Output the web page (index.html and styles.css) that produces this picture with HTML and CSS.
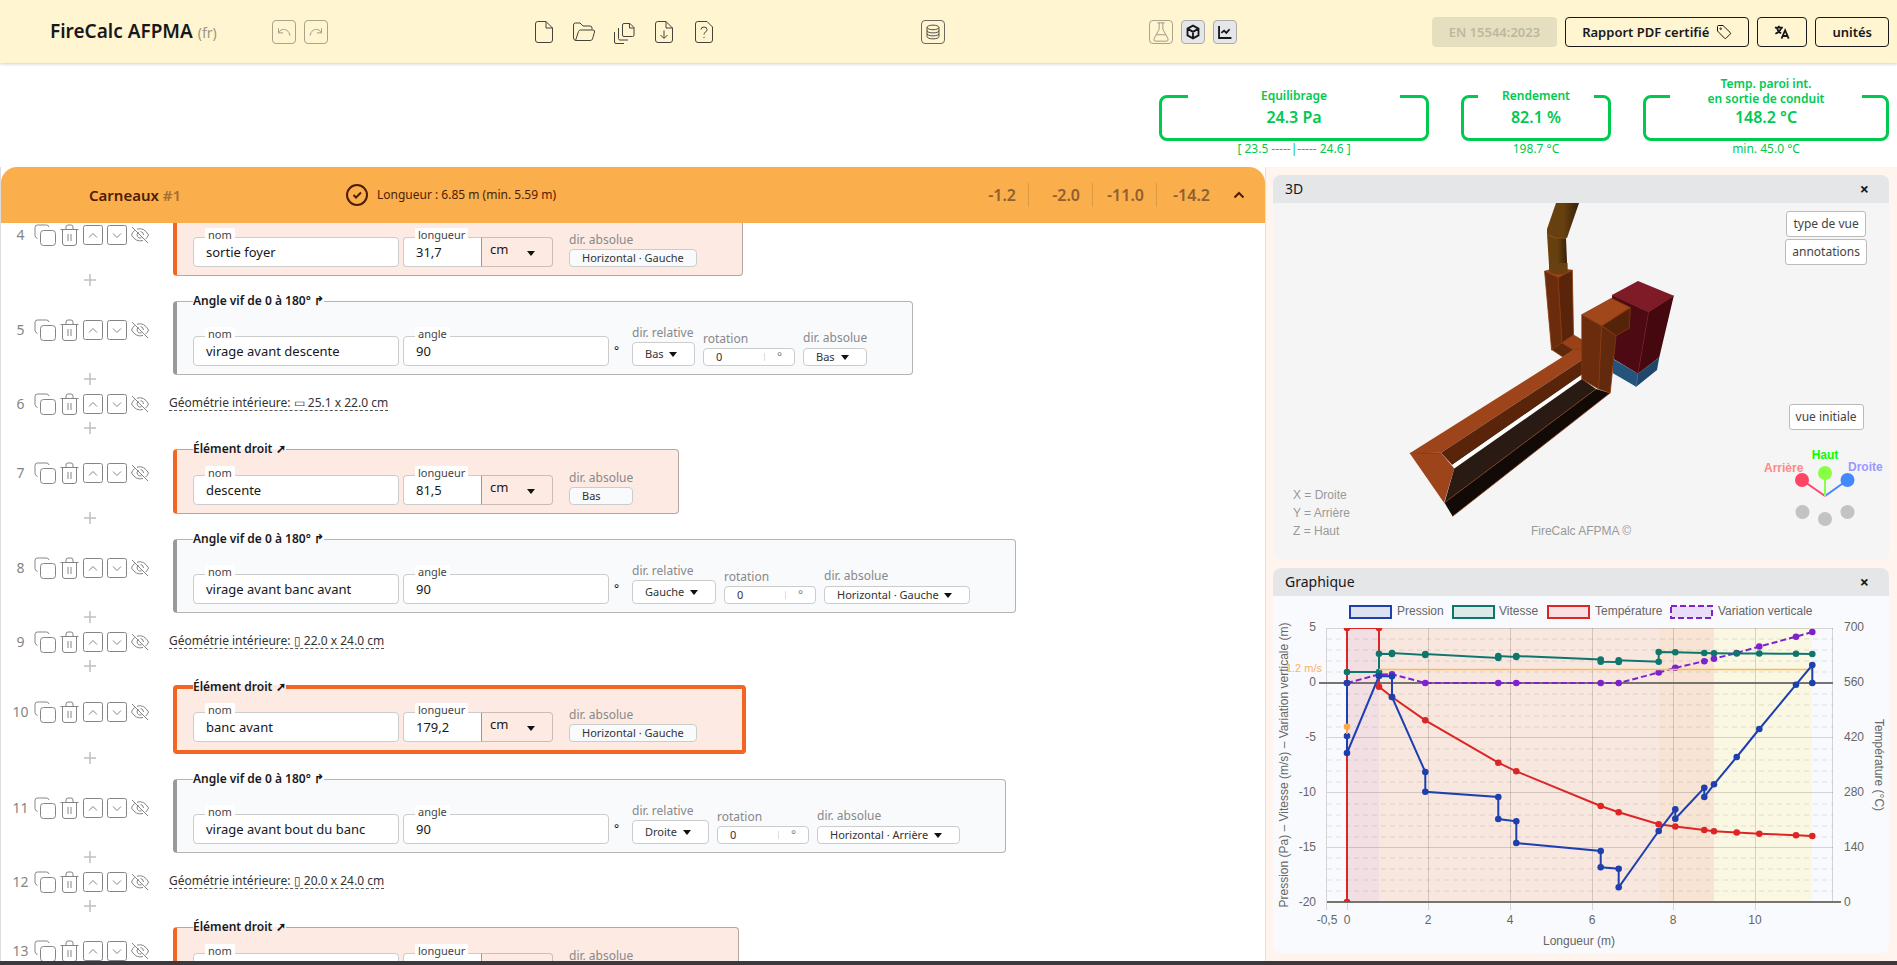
FILE: index.html
```html
<!DOCTYPE html>
<html lang="fr">
<head>
<meta charset="utf-8">
<meta name="viewport" content="width=device-width, initial-scale=1">
<title>FireCalc AFPMA</title>
<link rel="stylesheet" href="styles.css">
</head>
<body>
<svg class="sprite" aria-hidden="true">
  <symbol id="i-copy" viewBox="0 0 22 22"><path d="M3.500 14.500Q1 13.500 1 11.500V3.500Q1 1 3.500 1H12.500Q14.500 1 15 3"/><rect x="6.500" y="6.500" width="15" height="15" rx="3"/></symbol>
  <symbol id="i-trash" viewBox="0 0 18 22"><path d="M0 5.500H18M2 5.500V19Q2 21.500 4.500 21.500H13.500Q16 21.500 16 19V5.500M5.500 5V3Q5.500 1 7.500 1H10.500Q12.500 1 12.500 3V5M7.500 10V17M10.500 10V17"/></symbol>
  <symbol id="i-up" viewBox="0 0 20 20"><rect x=".5" y=".5" width="19" height="19" rx="2"/><path d="M6 12.500 10 8.500 14 12.500"/></symbol>
  <symbol id="i-down" viewBox="0 0 20 20"><rect x=".5" y=".5" width="19" height="19" rx="2"/><path d="M6 8.500 10 12.500 14 8.500"/></symbol>
  <symbol id="i-eye" viewBox="0 0 18 18"><path d="M1 1 17 17M6 3.200Q13 1 17.500 9 16.500 11.500 14.500 13.200M3.500 4.500Q1.500 6.500.500 9 5 16.500 12 14.500M7.500 6.200Q5 8 6.500 10.500 8 12.800 10.500 11.800M9.500 5.500Q12.500 6 12.500 9"/></symbol>
  <symbol id="i-plus" viewBox="0 0 12 12"><path d="M6 0V12M0 6H12" stroke-width="1.500"/></symbol>
  <symbol id="i-caret" viewBox="0 0 8 5"><path d="M0 0H8L4 5Z" fill="#111" stroke="none"/></symbol>
</svg>

<header class="topbar">
  <h1 class="brand">FireCalc AFPMA <small>(fr)</small></h1>
  <div class="group tight">
    <button class="tool faded" aria-label="Annuler"><svg viewBox="0 0 24 24"><path d="M6 8V13H11M6 13C8 9 12 8.500 15 10Q18 12 18.500 16"/></svg></button>
    <button class="tool faded" aria-label="Rétablir"><svg viewBox="0 0 24 24"><path d="M18 8V13H13M18 13C16 9 12 8.500 9 10Q6 12 5.500 16"/></svg></button>
  </div>
  <div class="group files">
    <button class="plain" aria-label="Nouveau"><svg viewBox="0 0 24 24"><path d="M5.500 1.500H14L20.500 8V20Q20.500 22.500 18 22.500H6Q3.500 22.500 3.500 20V4Q3.500 1.500 5.500 1.500ZM14 1.500V8H20.500"/></svg></button>
    <button class="plain" aria-label="Ouvrir"><svg viewBox="0 0 24 24"><path d="M3.500 20.500Q1.500 20 1.500 18V5Q1.500 3 3.500 3H8L11 6H18Q20 6 20 8V9.500M3.500 20.500 6.500 11.500Q7 10 8.500 10H21Q23 10 22.500 12L20.500 19Q20 20.500 18 20.500Z"/></svg></button>
    <button class="plain" aria-label="Dupliquer"><svg viewBox="0 0 24 24"><path d="M12 3.500H18L22 7.500V15Q22 16.500 20.500 16.500H12Q10.500 16.500 10.500 15V5Q10.500 3.500 12 3.500ZM17.500 3.500V8H22M6.500 8V18.500Q6.500 20 8 20H16M2.500 12V22Q2.500 23.500 4 23.500H12"/></svg></button>
    <button class="plain" aria-label="Enregistrer"><svg viewBox="0 0 24 24"><path d="M5.500 1.500H14L20.500 8V20Q20.500 22.500 18 22.500H6Q3.500 22.500 3.500 20V4Q3.500 1.500 5.500 1.500ZM14 1.500V8H20.500M12 10.500V18M8.500 15 12 18.500 15.500 15"/></svg></button>
    <button class="plain" aria-label="Aide"><svg viewBox="0 0 24 24"><path d="M5.500 1.500H15L20.500 7V20Q20.500 22.500 18 22.500H6Q3.500 22.500 3.500 20V4Q3.500 1.500 5.500 1.500ZM9 9.500Q9 7 12 7T15 9.500Q15 11 13.500 12 12 13 12 14.500M12 17V18"/></svg></button>
  </div>
  <div class="group center">
    <button class="tool" aria-label="Base de données"><svg viewBox="0 0 24 24"><ellipse cx="12" cy="7" rx="6.500" ry="2.500"/><path d="M5.500 7V17C5.500 20.300 18.500 20.300 18.500 17V7M5.500 10.500C5.500 13.800 18.500 13.800 18.500 10.500M5.500 13.800C5.500 17 18.500 17 18.500 13.800"/></svg></button>
  </div>
  <div class="group center tight">
    <button class="tool faded" aria-label="Laboratoire"><svg viewBox="0 0 24 24"><path d="M8 2H16M10 2V9L4.500 19Q3.500 22 6 22H18Q20.500 22 19.500 19L14 9V2M7 15H17"/></svg></button>
    <button class="tool on" aria-label="3D"><svg viewBox="0 0 24 24"><path d="M12 5 18 8.300V15.700L12 19 6 15.700V8.300ZM6 8.300 12 11.800 18 8.300M12 11.800V19"/></svg></button>
    <button class="tool on" aria-label="Graphique"><svg viewBox="0 0 24 24"><path d="M5.500 5.500V18.500H19M8 13 11 10.500 13.500 13 17 9"/></svg></button>
  </div>
  <div class="group actions">
    <button class="btn" disabled>EN 15544:2023</button>
    <button class="btn">Rapport PDF certifié <svg viewBox="0 0 16 16"><path d="M1.500 2.500V7L8.500 14.200Q9.300 15 10.100 14.200L14.200 10.100Q15 9.300 14.200 8.500L7 1.500H2.500Q1.500 1.500 1.500 2.500Z"/><circle cx="4.700" cy="4.700" r=".8"/></svg></button>
    <button class="btn lang" aria-label="Langue"><svg viewBox="0 0 18 18"><path d="M1 4H10M5.500 2V4M8.500 4Q7 9 1.500 11M3 4Q4 8 8 10.500M8.500 16.500 12.500 7 16.500 16.500M9.800 13.500H15.200"/></svg></button>
    <button class="btn">unités</button>
  </div>
</header>

<section class="status">
  <div class="gauge wide">
    <div class="gauge-box"><span class="gauge-label">Equilibrage</span><strong>24.3 Pa</strong></div>
    <p>[ 23.5 -----|----- 24.6 ]</p>
  </div>
  <div class="gauge narrow">
    <div class="gauge-box"><span class="gauge-label">Rendement</span><strong>82.1 %</strong></div>
    <p>198.7 °C</p>
  </div>
  <div class="gauge medium">
    <div class="gauge-box"><span class="gauge-label double">Temp. paroi int.<br>en sortie de conduit</span><strong>148.2 °C</strong></div>
    <p>min. 45.0 °C</p>
  </div>
</section>

<main class="work">
  <section class="editor">
    <div class="banner">
      <h2>Carneaux <span>#1</span></h2>
      <div class="check"><svg viewBox="0 0 22 22"><circle cx="11" cy="11" r="10"/><path d="M7.500 11 10 13.500 15 8.500"/></svg>Longueur : 6.85 m (min. 5.59 m)</div>
      <div class="totals"><span>-1.2</span><span>-2.0</span><span>-11.0</span><span>-14.2</span></div>
      <button class="fold" aria-label="Replier"><svg viewBox="0 0 12 8"><path d="M1.500 6.500 6 2 10.500 6.500"/></svg></button>
    </div>
    <div class="scroller">
    <ol class="rows">
      <li class="row">
        <div class="ctl"><span>4</span><button aria-label="Copier"><svg class="copy"><use href="#i-copy"/></svg></button><button aria-label="Supprimer"><svg class="trash"><use href="#i-trash"/></svg></button><button aria-label="Monter"><svg class="move"><use href="#i-up"/></svg></button><button aria-label="Descendre"><svg class="move"><use href="#i-down"/></svg></button><button aria-label="Masquer"><svg class="eye"><use href="#i-eye"/></svg></button><button class="add" aria-label="Ajouter"><svg><use href="#i-plus"/></svg></button></div>
        <fieldset class="card straight"><legend>Élément droit ➚</legend><div class="fields">
          <label class="field"><span>nom</span><input value="sortie foyer"></label>
          <label class="field num"><span>longueur</span><input value="31,7"></label>
          <span class="unit"><select aria-label="unité"><option>cm</option></select><svg><use href="#i-caret"/></svg></span>
          <div class="dir"><span>dir. absolue</span><output>Horizontal · Gauche</output></div>
        </div></fieldset>
      </li>
      <li class="row">
        <div class="ctl"><span>5</span><button aria-label="Copier"><svg class="copy"><use href="#i-copy"/></svg></button><button aria-label="Supprimer"><svg class="trash"><use href="#i-trash"/></svg></button><button aria-label="Monter"><svg class="move"><use href="#i-up"/></svg></button><button aria-label="Descendre"><svg class="move"><use href="#i-down"/></svg></button><button aria-label="Masquer"><svg class="eye"><use href="#i-eye"/></svg></button><button class="add" aria-label="Ajouter"><svg><use href="#i-plus"/></svg></button></div>
        <fieldset class="card angle"><legend>Angle vif de 0 à 180° ↱</legend><div class="fields">
          <label class="field"><span>nom</span><input value="virage avant descente"></label>
          <label class="field"><span>angle</span><input value="90"></label><span class="deg">°</span>
          <label class="pick tall"><span>dir. relative</span><span class="sel"><select><option>Bas</option></select><svg><use href="#i-caret"/></svg></span></label>
          <label class="pick"><span>rotation</span><span class="rot"><input value="0"><i>°</i></span></label>
          <label class="pick"><span class="up">dir. absolue</span><span class="sel"><select><option>Bas</option></select><svg><use href="#i-caret"/></svg></span></label>
        </div></fieldset>
      </li>
      <li class="row">
        <div class="ctl"><span>6</span><button aria-label="Copier"><svg class="copy"><use href="#i-copy"/></svg></button><button aria-label="Supprimer"><svg class="trash"><use href="#i-trash"/></svg></button><button aria-label="Monter"><svg class="move"><use href="#i-up"/></svg></button><button aria-label="Descendre"><svg class="move"><use href="#i-down"/></svg></button><button aria-label="Masquer"><svg class="eye"><use href="#i-eye"/></svg></button><button class="add" aria-label="Ajouter"><svg><use href="#i-plus"/></svg></button></div>
        <a class="geo" href="#geo6">Géométrie intérieure: ▭ 25.1 x 22.0 cm</a>
      </li>
      <li class="row">
        <div class="ctl"><span>7</span><button aria-label="Copier"><svg class="copy"><use href="#i-copy"/></svg></button><button aria-label="Supprimer"><svg class="trash"><use href="#i-trash"/></svg></button><button aria-label="Monter"><svg class="move"><use href="#i-up"/></svg></button><button aria-label="Descendre"><svg class="move"><use href="#i-down"/></svg></button><button aria-label="Masquer"><svg class="eye"><use href="#i-eye"/></svg></button><button class="add" aria-label="Ajouter"><svg><use href="#i-plus"/></svg></button></div>
        <fieldset class="card straight"><legend>Élément droit ➚</legend><div class="fields">
          <label class="field"><span>nom</span><input value="descente"></label>
          <label class="field num"><span>longueur</span><input value="81,5"></label>
          <span class="unit"><select aria-label="unité"><option>cm</option></select><svg><use href="#i-caret"/></svg></span>
          <div class="dir"><span>dir. absolue</span><output>Bas</output></div>
        </div></fieldset>
      </li>
      <li class="row">
        <div class="ctl"><span>8</span><button aria-label="Copier"><svg class="copy"><use href="#i-copy"/></svg></button><button aria-label="Supprimer"><svg class="trash"><use href="#i-trash"/></svg></button><button aria-label="Monter"><svg class="move"><use href="#i-up"/></svg></button><button aria-label="Descendre"><svg class="move"><use href="#i-down"/></svg></button><button aria-label="Masquer"><svg class="eye"><use href="#i-eye"/></svg></button><button class="add" aria-label="Ajouter"><svg><use href="#i-plus"/></svg></button></div>
        <fieldset class="card angle"><legend>Angle vif de 0 à 180° ↱</legend><div class="fields">
          <label class="field"><span>nom</span><input value="virage avant banc avant"></label>
          <label class="field"><span>angle</span><input value="90"></label><span class="deg">°</span>
          <label class="pick tall"><span>dir. relative</span><span class="sel"><select><option>Gauche</option></select><svg><use href="#i-caret"/></svg></span></label>
          <label class="pick"><span>rotation</span><span class="rot"><input value="0"><i>°</i></span></label>
          <label class="pick"><span class="up">dir. absolue</span><span class="sel"><select><option>Horizontal · Gauche</option></select><svg><use href="#i-caret"/></svg></span></label>
        </div></fieldset>
      </li>
      <li class="row">
        <div class="ctl"><span>9</span><button aria-label="Copier"><svg class="copy"><use href="#i-copy"/></svg></button><button aria-label="Supprimer"><svg class="trash"><use href="#i-trash"/></svg></button><button aria-label="Monter"><svg class="move"><use href="#i-up"/></svg></button><button aria-label="Descendre"><svg class="move"><use href="#i-down"/></svg></button><button aria-label="Masquer"><svg class="eye"><use href="#i-eye"/></svg></button><button class="add" aria-label="Ajouter"><svg><use href="#i-plus"/></svg></button></div>
        <a class="geo" href="#geo9">Géométrie intérieure: ▯ 22.0 x 24.0 cm</a>
      </li>
      <li class="row">
        <div class="ctl"><span>10</span><button aria-label="Copier"><svg class="copy"><use href="#i-copy"/></svg></button><button aria-label="Supprimer"><svg class="trash"><use href="#i-trash"/></svg></button><button aria-label="Monter"><svg class="move"><use href="#i-up"/></svg></button><button aria-label="Descendre"><svg class="move"><use href="#i-down"/></svg></button><button aria-label="Masquer"><svg class="eye"><use href="#i-eye"/></svg></button><button class="add" aria-label="Ajouter"><svg><use href="#i-plus"/></svg></button></div>
        <fieldset class="card straight selected"><legend>Élément droit ➚</legend><div class="fields">
          <label class="field"><span>nom</span><input value="banc avant"></label>
          <label class="field num"><span>longueur</span><input value="179,2"></label>
          <span class="unit"><select aria-label="unité"><option>cm</option></select><svg><use href="#i-caret"/></svg></span>
          <div class="dir"><span>dir. absolue</span><output>Horizontal · Gauche</output></div>
        </div></fieldset>
      </li>
      <li class="row">
        <div class="ctl"><span>11</span><button aria-label="Copier"><svg class="copy"><use href="#i-copy"/></svg></button><button aria-label="Supprimer"><svg class="trash"><use href="#i-trash"/></svg></button><button aria-label="Monter"><svg class="move"><use href="#i-up"/></svg></button><button aria-label="Descendre"><svg class="move"><use href="#i-down"/></svg></button><button aria-label="Masquer"><svg class="eye"><use href="#i-eye"/></svg></button><button class="add" aria-label="Ajouter"><svg><use href="#i-plus"/></svg></button></div>
        <fieldset class="card angle"><legend>Angle vif de 0 à 180° ↱</legend><div class="fields">
          <label class="field"><span>nom</span><input value="virage avant bout du banc"></label>
          <label class="field"><span>angle</span><input value="90"></label><span class="deg">°</span>
          <label class="pick tall"><span>dir. relative</span><span class="sel"><select><option>Droite</option></select><svg><use href="#i-caret"/></svg></span></label>
          <label class="pick"><span>rotation</span><span class="rot"><input value="0"><i>°</i></span></label>
          <label class="pick"><span class="up">dir. absolue</span><span class="sel"><select><option>Horizontal · Arrière</option></select><svg><use href="#i-caret"/></svg></span></label>
        </div></fieldset>
      </li>
      <li class="row">
        <div class="ctl"><span>12</span><button aria-label="Copier"><svg class="copy"><use href="#i-copy"/></svg></button><button aria-label="Supprimer"><svg class="trash"><use href="#i-trash"/></svg></button><button aria-label="Monter"><svg class="move"><use href="#i-up"/></svg></button><button aria-label="Descendre"><svg class="move"><use href="#i-down"/></svg></button><button aria-label="Masquer"><svg class="eye"><use href="#i-eye"/></svg></button><button class="add" aria-label="Ajouter"><svg><use href="#i-plus"/></svg></button></div>
        <a class="geo" href="#geo12">Géométrie intérieure: ▯ 20.0 x 24.0 cm</a>
      </li>
      <li class="row">
        <div class="ctl"><span>13</span><button aria-label="Copier"><svg class="copy"><use href="#i-copy"/></svg></button><button aria-label="Supprimer"><svg class="trash"><use href="#i-trash"/></svg></button><button aria-label="Monter"><svg class="move"><use href="#i-up"/></svg></button><button aria-label="Descendre"><svg class="move"><use href="#i-down"/></svg></button><button aria-label="Masquer"><svg class="eye"><use href="#i-eye"/></svg></button></div>
        <fieldset class="card straight"><legend>Élément droit ➚</legend><div class="fields">
          <label class="field"><span>nom</span><input></label>
          <label class="field num"><span>longueur</span><input></label>
          <span class="unit"><select aria-label="unité"><option>cm</option></select><svg><use href="#i-caret"/></svg></span>
          <div class="dir"><span>dir. absolue</span><output>Horizontal · Arrière</output></div>
        </div></fieldset>
      </li>
    </ol>
    </div>
  </section>

  <aside class="side">
    <section class="panel view">
      <header><h3>3D</h3><button aria-label="Fermer">×</button></header>
      <div class="stage">
        <svg viewBox="0 0 616 357" role="img" aria-label="Vue 3D du poêle">
          <defs>
            <linearGradient id="pipe"><stop offset="0" stop-color="#69400f"/><stop offset=".5" stop-color="#66400f"/><stop offset="1" stop-color="#38200a"/></linearGradient>
          </defs>
          <g stroke="none" stroke-width="1" stroke-linejoin="round">
            <g fill="url(#pipe)"><path d="M283 0H306L294 35H282L274 31V26Z"/><path d="M274 31 282 35H293L294.500 70Q286 74 276.500 70Z"/></g>
            <path d="M274 31 282 35H293" fill="none" stroke="#8a4a12"/>
            <g stroke="#84390f" stroke-width=".8">
              <path fill="#9e441a" d="M271.600 68.300 283 65 299.300 67.300 285.200 74.700Z"/>
              <path fill="#6b2c0d" d="M271.600 68.300 285.200 74.700 289 140 278.600 147Z"/>
              <path fill="#5a240a" d="M285.200 74.700 299.300 67.300 300.500 132 289 140Z"/>
              <path fill="#5f280c" d="M278.600 146.500 289 139.700 300.500 147 289.800 154Z"/>
              <path fill="#9a4118" d="M289 139.700 300.500 132 309 137V147H300.500Z"/>
              <path fill="#9e441a" stroke="none" d="M300.500 147H309V157L168 249.700 136.700 250.300Z"/>
              <path fill="#5a240a" stroke="none" d="M309 157V172L179.200 262 168 249.700Z"/>
            </g>
            <path fill="#69400f" d="M276.500 69Q286 74 294.500 69V60H276Z"/>
            <path fill="#fff" d="M309 171.500V176L181.300 265.500 179.200 262Z"/>
            <path fill="#9e441a" d="M136.700 250.300 168 249.700 181.300 265.500 171 299.700Z"/>
            <path fill="none" stroke="#84390f" stroke-width=".8" d="M136.700 250.300H168"/>
            <path fill="#291b14" d="M181.300 265.500 309 176 323 186 171.500 299.700Z"/>
            <path fill="#120a06" d="M171.500 299.700 323 186 337 190 179.600 313.300Z"/>
            <path fill="none" stroke="#84390f" stroke-width=".8" d="M171.500 299.700 323 186M337 190 179.600 313.300"/>
            <path fill="#24547c" d="M340 156 365 170.700 363.200 183.700 340 170.300Z"/>
            <path fill="#1f476b" d="M365 170.700 386.300 154.300 384 167 363.200 183.700Z"/>
            <path fill="none" stroke="#2f6b9b" stroke-width=".8" d="M365 170.700 363.200 183.700"/>
            <path fill="#4e0a13" d="M339 92 375.600 109 365 170.700 341 156.300Z"/>
            <path fill="#45080f" d="M375.600 109 400.800 92.700 386.300 154.300 365 170.700Z"/>
            <path fill="#7e1b26" d="M339 92 365 78 400.800 92.700 375.600 109Z"/>
            <path fill="none" stroke="#701019" stroke-width=".8" d="M339 92 375.600 109 400.800 92.700M375.600 109 365 170.700"/>
            <g stroke="#84390f" stroke-width=".8">
              <path fill="#6b2c0d" d="M308.800 111.700 328.600 122.700 325.700 186 308.800 176Z"/>
              <path fill="#62290c" d="M328.600 122.700 343 132.700 337.200 190 325.700 186Z"/>
              <path fill="#55230a" d="M328.600 122.700 357.400 105 356.200 125.300 343 132.700Z"/>
              <path fill="#a2471b" d="M308.800 111.700 338.500 95.300 357.400 104.500 328.600 122.700Z"/>
            </g>
          </g>
          <g stroke-width="2"><path stroke="#ff4466" d="M552 293 529 277"/><path stroke="#4488ff" d="M552 293 574.500 277"/><path stroke="#88ff44" d="M552 293V271"/></g>
          <g stroke="none"><circle cx="529" cy="277" r="7" fill="#ff4466"/><circle cx="552" cy="270" r="7" fill="#88ff44"/><circle cx="574.500" cy="277" r="7" fill="#4488ff"/></g>
          <g fill="#c3c3c3" stroke="none"><circle cx="529.500" cy="309" r="7"/><circle cx="552" cy="316" r="7"/><circle cx="574.500" cy="309" r="7"/></g>
          <g class="strong"><text x="552" y="256" text-anchor="middle" fill="#0f0">Haut</text><text x="491" y="269" fill="#f88">Arrière</text><text x="575" y="268" fill="#99f">Droite</text></g>
          <g fill="#999"><text x="20" y="296">X = Droite</text><text x="20" y="314">Y = Arrière</text><text x="20" y="332">Z = Haut</text><text x="308" y="332" text-anchor="middle">FireCalc AFPMA ©</text></g>
        </svg>
        <div class="view-buttons"><button>type de vue</button><button>annotations</button><button class="reset">vue initiale</button></div>
      </div>
    </section>
    <section class="panel graph">
      <header><h3>Graphique</h3><button aria-label="Fermer">×</button></header>
      <div class="stage">
        <svg viewBox="0 0 616 357" role="img" aria-label="Graphique pression, vitesse, température">
          <defs>
            <marker id="mb" markerUnits="userSpaceOnUse" markerWidth="8" markerHeight="8" refX="4" refY="4"><circle cx="4" cy="4" r="3.300" fill="#1e40af" stroke="none"/></marker>
            <marker id="mg" markerUnits="userSpaceOnUse" markerWidth="8" markerHeight="8" refX="4" refY="4"><circle cx="4" cy="4" r="3.300" fill="#0f766e" stroke="none"/></marker>
            <marker id="mr" markerUnits="userSpaceOnUse" markerWidth="8" markerHeight="8" refX="4" refY="4"><circle cx="4" cy="4" r="3.300" fill="#dc2626" stroke="none"/></marker>
            <marker id="mv" markerUnits="userSpaceOnUse" markerWidth="8" markerHeight="8" refX="4" refY="4"><circle cx="4" cy="4" r="3.300" fill="#7e22ce" stroke="none"/></marker>
            <clipPath id="plot"><rect x="46" y="32" width="514" height="274"/></clipPath>
          </defs>
          <g stroke="none"><rect x="74" y="32" width="32" height="274" fill="#f2dfe3"/><rect x="106" y="32" width="280" height="274" fill="#f8e7df"/><rect x="386" y="32" width="55" height="274" fill="#f7e4d4"/><rect x="441" y="32" width="98" height="274" fill="#faf8e3"/></g>
          <path class="minor" d="M54 43H560M54 54H560M54 65H560M54 76H560M54 98H560M54 109H560M54 120H560M54 131H560M54 153H560M54 164H560M54 175H560M54 186H560M54 208H560M54 219H560M54 230H560M54 241H560M54 262H560M54 273H560M54 284H560M54 295H560"/>
          <path class="major" d="M54 32.500H560M54 141.500H560M54 196.500H560M54 251.500H560M53.500 32V314M74.500 32V314M155.500 32V314M237.500 32V314M319.500 32V314M400.500 32V314M482.500 32V314M559.500 32V306"/>
          <path class="axis" d="M46 87H560M54 306H568"/>
          <g clip-path="url(#plot)">
            <polyline class="line variation" points="74,87 106,78.500 119,78.200 152.300,87 225.300,87 243.300,87 327.700,87 345.700,87 385.700,76.500 402.300,71.800 431.300,65.200 441,62.700 463.700,57 486.300,50.500 523,40.700 539.300,36"/>
            <polyline class="line temperature" points="74,306 74,32 106,32 106,90.700 119,101 152.300,124.300 225.300,166.700 243.300,175.300 327.700,210 345.700,216.300 385.700,228.300 402.300,230.500 431.300,234 441,235.300 463.700,236.500 486.300,237.700 523,239.300 539.300,240"/>
            <polyline class="line speed" points="74,76 106,76 106,57.700 119,58 119,57 152.300,59 152.300,58 225.300,62 225.300,60 243.300,61 243.300,60 327.700,63.500 327.700,65.700 345.700,66 345.700,64.300 385.700,65.700 385.700,56 402.300,56.300 431.300,57 441,57.200 463.700,57.400 486.300,57.500 523,57.800 539.300,58"/>
            <path d="M106 73.500H539" stroke="#ffb84d" stroke-width="1.500"/>
            <polyline class="line pressure" points="74,87 74,140 74,157 106,80 119,80.300 119,101 152.300,176 152.300,195.700 225.300,201 225.300,223 243.300,225.300 243.300,247 327.700,255 327.700,271.300 345.700,272.700 345.700,291.300 385.700,235 402.300,213.300 402.300,222.700 431.300,191.700 431.300,201 441,188.300 463.700,161 486.300,133 523,88.700 539.300,69 539.300,87"/>
            <path d="M74 131V138" stroke="#f9a84a" stroke-width="2"/><circle cx="74" cy="130.700" r="3.300" fill="#f9a84a" stroke="none"/>
          </g>
          <g stroke-width="2"><rect x="77" y="10" width="41" height="12" fill="#dde2f2" stroke="#1e40af"/><rect x="180" y="10" width="41" height="12" fill="#dbe9e9" stroke="#0f766e"/><rect x="275" y="10" width="41" height="12" fill="#f8dfe1" stroke="#dc2626"/><rect x="398" y="10" width="41" height="12" fill="#eaddf7" stroke="#7e22ce" stroke-dasharray="6 3"/></g>
          <g fill="#666">
            <text x="124" y="19">Pression</text><text x="226" y="19">Vitesse</text><text x="322" y="19">Température</text><text x="445" y="19">Variation verticale</text>
            <g text-anchor="end"><text x="43" y="35">5</text><text x="43" y="90">0</text><text x="43" y="145">-5</text><text x="43" y="200">-10</text><text x="43" y="255">-15</text><text x="43" y="310">-20</text></g>
            <text x="571" y="35">700</text><text x="571" y="90">560</text><text x="571" y="145">420</text><text x="571" y="200">280</text><text x="571" y="255">140</text><text x="571" y="310">0</text>
            <g text-anchor="middle"><text x="54" y="328">-0,5</text><text x="74" y="328">0</text><text x="155" y="328">2</text><text x="237" y="328">4</text><text x="319" y="328">6</text><text x="400" y="328">8</text><text x="482" y="328">10</text><text x="306" y="349">Longueur (m)</text>
            <text transform="translate(15 169) rotate(-90)">Pression (Pa) – Vitesse (m/s) – Variation verticale (m)</text><text transform="translate(602 169) rotate(90)">Température (°C)</text></g>
          </g>
          <text class="limit" x="49" y="76" text-anchor="end">1.2 m/s</text>
        </svg>
      </div>
    </section>
  </aside>
</main>
</body>
</html>
```
FILE: styles.css
```css
* { box-sizing: border-box; }
body {
  margin: 0;
  height: 100vh;
  display: flex;
  flex-direction: column;
  border-bottom: 4px solid #3b393e;
  font: 12px/16px "Noto Sans", sans-serif;
  color: #18181b;
  background: #fff;
  overflow: hidden;
}
button, input, select { font: inherit; color: inherit; margin: 0; }
button { padding: 0; border: 0; background: none; cursor: pointer; }
svg { display: block; fill: none; stroke: currentColor; }
h1, h2, h3, p, ol { margin: 0; padding: 0; }
.sprite { position: absolute; width: 0; height: 0; }

.topbar {
  flex: none;
  height: 63px;
  padding: 0 8px 0 50px;
  display: grid;
  grid-template-columns: 222fr 200fr 304fr 314fr 206fr 593fr;
  align-items: center;
  background: #fff5d1;
  box-shadow: 0 1px 3px #0003;
}
.brand { font-size: 19px; line-height: 28px; font-weight: 600; white-space: nowrap; }
.brand small { font-size: 14px; font-weight: 400; color: #9b9780; }
.group { display: flex; align-items: center; gap: 8px; }
.center { justify-content: center; }
.files { justify-content: center; gap: 16px; }
.tool { width: 24px; height: 24px; border: 1px solid #6b6960; border-radius: 4px; color: #45433c; }
.tool svg { width: 22px; height: 22px; }
.plain svg { width: 24px; height: 24px; color: #45433c; }
.tool.faded { color: #99947d; border-color: #a8a48c; }
.tool.on { background: #e5e6e8; border-color: #a9aaab; color: #18181b; }
.tool.on svg { stroke-width: 2; }
.actions { justify-content: flex-end; }
.btn {
  height: 30px;
  padding: 0 16px;
  display: flex;
  align-items: center;
  gap: 7px;
  border: 1px solid #18181b;
  border-radius: 4px;
  font-size: 13px;
  font-weight: 600;
  white-space: nowrap;
}
.btn:disabled { background: #e6dfbf; border-color: #e6dfbf; color: #bdb89e; }
.btn svg { width: 16px; height: 16px; }
.btn.lang svg { width: 16px; height: 16px; stroke-width: 2; }

.status {
  flex: none;
  height: 104px;
  padding: 32px 8px 0 0;
  display: flex;
  justify-content: flex-end;
  gap: 32px;
  color: #00c950;
  text-align: center;
}
.wide { width: 270px; }
.narrow { width: 150px; }
.medium { width: 246px; }
.gauge-box {
  position: relative;
  height: 46px;
  padding-top: 8px;
  border: 3px solid;
  border-radius: 8px;
}
.gauge-box strong { position: relative; font-size: 16px; line-height: 22px; font-weight: 600; }
.gauge-label {
  position: absolute;
  left: 10%;
  right: 10%;
  top: -3px;
  transform: translateY(-50%);
  background: #fff;
  font-weight: 600;
  line-height: 15px;
  white-space: nowrap;
}
.double { padding-bottom: 8px; }

.work { flex: 1; min-height: 0; display: grid; grid-template-columns: 1265fr 632fr; }
.editor { min-width: 0; min-height: 0; display: flex; flex-direction: column; border-left: 1px solid #ddd; }
.banner {
  flex: none;
  height: 56px;
  padding: 0 20px 0 88px;
  display: flex;
  align-items: center;
  border-radius: 16px 16px 0 0;
  background: #fbae4c;
  color: #4d1d06;
}
.banner h2 { width: 257px; font-size: 15px; font-weight: 600; }
.banner h2 span { color: #a46f32; }
.check { display: flex; align-items: center; gap: 9px; }
.check svg { width: 22px; height: 22px; stroke-width: 2; }
.totals { margin-left: auto; display: flex; font-size: 16px; font-weight: 600; line-height: 24px; color: #8f6030; }
.totals span { width: 64px; padding-right: 12px; text-align: right; border-right: 1px solid #dd9a45; }
.totals span:last-child { padding-right: 11px; border: 0; }
.fold { margin-left: 12px; }
.fold svg { width: 12px; height: 8px; stroke-width: 2; }

.scroller { flex: 1; min-height: 0; overflow: hidden; }
.rows { list-style: none; margin-top: -33px; }
.row { display: flex; align-items: center; min-height: 49px; }
.ctl {
  position: relative;
  align-self: stretch;
  width: 148px;
  margin-right: 20px;
  display: flex;
  align-items: center;
  gap: 4px;
  color: #858585;
}
.ctl > span { width: 29px; padding-left: 10px; text-align: center; font-size: 14px; }
.copy { width: 22px; height: 22px; }
.trash { width: 19px; height: 22px; }
.move { width: 20px; height: 20px; }
.eye { width: 18px; height: 18px; }
.add { position: absolute; left: 83px; bottom: -6px; color: #c0c0c0; }
.add svg { width: 12px; height: 12px; }
.geo { color: #333; text-decoration: none; border-bottom: 1px dashed #555; line-height: 14px; }

.card {
  margin: 12px 0 4px 4px;
  padding: 0 45px 8px 16px;
  border: 1px solid #b3b3b3;
  border-left: 4px solid #999;
  border-radius: 4px;
  min-width: 0;
}
.card legend { padding: 0; font-weight: 600; line-height: 18px; }
.straight { background: #fdebe3; border-color: #b5a6a0; border-left-color: #f26522; }
.angle { background: #f9fafc; }
.selected { border: 4px solid #f26522; }
.fields { display: flex; align-items: flex-end; }
.straight .fields { height: 47px; }
.angle .fields { height: 56px; }
.selected .fields { height: 46px; }
.field { position: relative; width: 206px; margin-right: 4px; }
.field > span {
  position: absolute;
  left: 12px;
  top: -9px;
  padding: 0 3px;
  background: #fff;
  border-radius: 2px;
  font-size: 11px;
  line-height: 14px;
  color: #444;
}
.field input {
  display: block;
  width: 100%;
  height: 30px;
  padding: 0 12px;
  border: 1px solid #ccc;
  border-radius: 4px;
  background: #fff;
  font-size: 13px;
}
.num { width: 78px; margin: 0; }
.num input { border-radius: 4px 0 0 4px; border-right: 0; }
.unit { position: relative; width: 72px; margin-right: 16px; }
.unit select {
  appearance: none;
  display: block;
  width: 100%;
  height: 30px;
  padding: 0 8px 6px;
  border: 1px solid #ccbcb5;
  border-left-color: #999;
  border-radius: 0 4px 4px 0;
  background: transparent;
  font-size: 13px;
}
.unit svg, .sel svg { position: absolute; pointer-events: none; width: 8px; height: 5px; right: 18px; }
.unit svg { top: 14px; }
.dir, .pick { display: flex; flex-direction: column; color: #888; }
.dir > span, .pick > span:first-child { line-height: 16px; padding-bottom: 1px; white-space: nowrap; }
.dir output {
  height: 18px;
  padding: 0 12px;
  border: 1px solid #ccc;
  border-radius: 4px;
  background: #f9fafc;
  color: #333;
  font-size: 11px;
  line-height: 16px;
}
.pick { margin-right: 8px; }
.pick:last-child { margin-right: 0; }
.deg { width: 19px; padding-left: 1px; line-height: 30px; }
.sel { position: relative; }
.sel select {
  appearance: none;
  display: block;
  width: 100%;
  height: 18px;
  padding: 0 30px 0 12px;
  border: 1px solid #ccc;
  border-radius: 4px;
  background: #fff;
  color: #333;
  font-size: 11px;
}
.sel svg { top: 7px; }
.tall .sel select { height: 24px; }
.tall .sel svg { top: 10px; }
.rot {
  display: flex;
  width: 92px;
  height: 18px;
  border: 1px solid #ccc;
  border-radius: 4px;
  background: #fff;
}
.rot input { width: 60px; padding: 0 0 0 12px; border: 0; background: none; color: #333; font-size: 11px; }
.rot i { margin: 4px 0; padding-left: 12px; border-left: 1px solid #ddd; font-style: normal; line-height: 8px; }
.pick > .up:first-child { padding-bottom: 2px; }

.side {
  min-height: 0;
  padding: 8px 8px 8px 7px;
  display: grid;
  grid-template-rows: 1fr 1fr;
  gap: 8px;
  background: #fff5ee;
  border-left: 1px solid #e2e0e2;
}
.panel { min-height: 0; display: flex; flex-direction: column; border-radius: 8px; overflow: hidden; background: #f5f5f5; }
.graph { background: #f9fafd; }
.panel header {
  flex: none;
  height: 28px;
  padding: 0 20px 0 12px;
  display: flex;
  align-items: center;
  justify-content: space-between;
  background: #e4e6e8;
}
.panel h3 { font-size: 14px; font-weight: 400; }
.panel header button { font-size: 16px; font-weight: 700; }
.stage { position: relative; flex: 1; min-height: 0; }
.stage > svg { width: 100%; height: 100%; }
.stage text { font: 12px "Liberation Sans", sans-serif; stroke: none; }
.stage .strong text { font-weight: 700; }
.view-buttons {
  position: absolute;
  top: 8px;
  right: 22px;
  display: flex;
  flex-direction: column;
  align-items: center;
  gap: 2px;
}
.view-buttons button {
  height: 26px;
  padding: 0 6px;
  border: 1px solid #bbb;
  border-radius: 3px;
  background: #fff;
  color: #444;
}
.view-buttons .reset { margin-top: 137px; }
.minor { stroke: #0000001a; stroke-dasharray: 5 4; }
.major { stroke: #00000026; }
.axis { stroke: #77736f; stroke-width: 2; }
.line { stroke-width: 2; }
.pressure { stroke: #1e40af; marker: url(#mb); }
.speed { stroke: #0f766e; marker: url(#mg); }
.temperature { stroke: #dc2626; marker: url(#mr); }
.variation { stroke: #7e22ce; stroke-dasharray: 6 3; marker: url(#mv); }
.stage .limit { font-size: 11px; fill: #f9b25c; }
```
